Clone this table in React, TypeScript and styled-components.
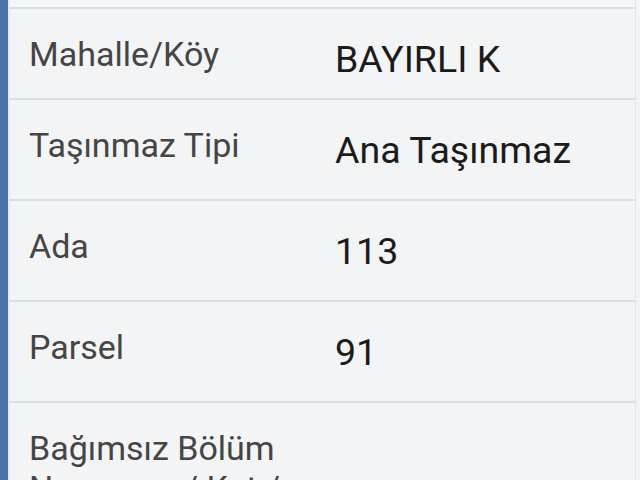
import React from "react";
import styled, { createGlobalStyle } from "styled-components";

const Global = createGlobalStyle`
  html, body { margin: 0; padding: 0; background: #f3f4f6; overflow: hidden; }
  body { font-family: Roboto, "Noto Sans", "Liberation Sans", sans-serif; }
`;

const Page = styled.div`
  display: flex;
  width: 640px;
  height: 480px;
  overflow: hidden;
  background: #f3f4f6;
`;

const SideBar = styled.div`
  width: 8px;
  flex: none;
  background: #4b72a9;
  border-right: 2px solid #e4ecf6;
`;

const Table = styled.div`
  flex: 1;
  display: flex;
  flex-direction: column;
  border-right: 1px solid #e3e4e7;
  margin-right: 4px;
`;

const TopEdge = styled.div`
  height: 7px;
  flex: none;
  background: #f6f7f8;
  border-bottom: 2px solid #dcdddf;
`;

const Row = styled.div<{ $h: number }>`
  display: grid;
  grid-template-columns: 306px 1fr;
  height: ${(p) => p.$h}px;
  flex: none;
  border-bottom: 2px solid #dcdddf;
`;

const Label = styled.div<{ $pt: number }>`
  padding: ${(p) => p.$pt}px 10px 0 19px;
  font-size: 34px;
  line-height: 40px;
  color: #454545;
`;

const Value = styled.div<{ $pt: number }>`
  padding: ${(p) => p.$pt + 3}px 0 0 19px;
  font-size: 37.5px;
  line-height: 44px;
  color: #1b1b1b;
`;

const rows: [string, string][] = [
  ["Mahalle/Köy", "BAYIRLI K"],
  ["Taşınmaz Tipi", "Ana Taşınmaz"],
  ["Ada", "113"],
  ["Parsel", "91"],
  ["Bağımsız Bölüm Numarası / Kat / Daire", ""],
];

export default function App() {
  return (
    <Page>
      <Global />
      <SideBar />
      <Table>
        <TopEdge />
        {rows.map(([l, v], i) => (
          <Row key={l} $h={i === 0 ? 89 : i === 4 ? 160 : 99}>
            <Label $pt={i === 0 ? 25 : 25}>{l}</Label>
            <Value $pt={i === 0 ? 25 : 25}>{v}</Value>
          </Row>
        ))}
      </Table>
    </Page>
  );
}
